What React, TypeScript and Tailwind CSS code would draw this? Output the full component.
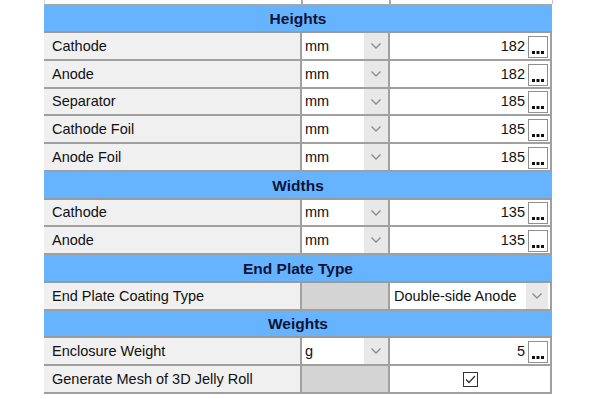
import React from "react";

type Row =
  | { kind: "header"; title: string; h: number }
  | { kind: "unit"; label: string; unit: string; value: string; h: number }
  | { kind: "combo"; label: string; value: string; h: number }
  | { kind: "check"; label: string; h: number };

const rows: Row[] = [
  { kind: "header", title: "Heights", h: 28 },
  { kind: "unit", label: "Cathode", unit: "mm", value: "182", h: 28 },
  { kind: "unit", label: "Anode", unit: "mm", value: "182", h: 28 },
  { kind: "unit", label: "Separator", unit: "mm", value: "185", h: 27 },
  { kind: "unit", label: "Cathode Foil", unit: "mm", value: "185", h: 28 },
  { kind: "unit", label: "Anode Foil", unit: "mm", value: "185", h: 28 },
  { kind: "header", title: "Widths", h: 28 },
  { kind: "unit", label: "Cathode", unit: "mm", value: "135", h: 27 },
  { kind: "unit", label: "Anode", unit: "mm", value: "135", h: 28 },
  { kind: "header", title: "End Plate Type", h: 28 },
  { kind: "combo", label: "End Plate Coating Type", value: "Double-side Anode", h: 28 },
  { kind: "header", title: "Weights", h: 27 },
  { kind: "unit", label: "Enclosure Weight", unit: "g", value: "5", h: 28 },
  { kind: "check", label: "Generate Mesh of 3D Jelly Roll", h: 28 },
];

const Chevron = () => (
  <svg width="12" height="8" viewBox="0 0 12 8" fill="none">
    <path d="M1.5 1.5 L6 6 L10.5 1.5" stroke="#8a8a8a" strokeWidth="1.3" />
  </svg>
);

const Dots = () => (
  <div className="ml-[3px] mr-[2px] flex h-[22px] w-[20px] items-end justify-center border border-[#8f8f8f] bg-white pb-[3px]">
    <svg width="12" height="3" viewBox="0 0 12 3">
      <rect x="0" y="0" width="3" height="3" fill="#111" />
      <rect x="4.5" y="0" width="3" height="3" fill="#111" />
      <rect x="9" y="0" width="3" height="3" fill="#111" />
    </svg>
  </div>
);

export default function App() {
  const font = { fontFamily: '"Liberation Sans", Arial, sans-serif' };
  return (
    <div className="h-[399px] w-[600px] overflow-hidden bg-white" style={font}>
      <div className="ml-[44px] w-[508px]">
        {/* partial row at top */}
        <div className="grid h-[5px] grid-cols-[256px_90px_162px] border-b border-[#a8a8a8] border-l border-l-[#d8d8d8]">
          <div className="bg-white" />
          <div className="border-x-2 border-[#a8a8a8] bg-white" />
          <div className="border-r border-[#c8c8c8] bg-white" />
        </div>
        {rows.map((r, i) => {
          if (r.kind === "header") {
            return (
              <div
                key={i}
                className="flex items-center justify-center border-b-2 border-[#9a9a9a] bg-[#66b3ff] pt-[1px] text-[15.5px] font-bold text-[#0c1436]"
                style={{ height: r.h }}
              >
                {r.title}
              </div>
            );
          }
          return (
            <div
              key={i}
              className="grid grid-cols-[256px_90px_162px] border-b-2 border-[#a0a0a0]"
              style={{ height: r.h }}
            >
              <div className="flex items-center bg-[#f0f0f0] pl-[8px] pt-[1px] text-[14.5px] text-[#111]">{r.label}</div>
              {r.kind === "unit" ? (
                <div className="flex border-x-2 border-[#a0a0a0] bg-white">
                  <div className="flex flex-1 items-center pl-[3px] pt-[1px] text-[14.5px] text-[#111]">{r.unit}</div>
                  <div className="flex w-[24px] items-center justify-center bg-[#e8e8e8]">
                    <Chevron />
                  </div>
                </div>
              ) : (
                <div className="border-x-2 border-[#a0a0a0] bg-[#d4d4d4]" />
              )}
              {r.kind === "unit" && (
                <div className="flex items-center justify-end border-r-2 border-[#a0a0a0] bg-white pt-[1px] text-[14.5px] text-[#111]">
                  <span>{r.value}</span>
                  <Dots />
                </div>
              )}
              {r.kind === "combo" && (
                <div className="flex border-r-2 border-[#a0a0a0] bg-white">
                  <div className="flex flex-1 items-center pl-[4px] pt-[1px] text-[14.5px] text-[#111]">{r.value}</div>
                  <div className="mr-[2px] flex w-[22px] items-center justify-center bg-[#e8e8e8]">
                    <Chevron />
                  </div>
                </div>
              )}
              {r.kind === "check" && (
                <div className="flex items-center justify-center border-r-2 border-[#a0a0a0] bg-white">
                  <div className="flex h-[15px] w-[15px] items-center justify-center border border-[#333] bg-white">
                    <svg width="11" height="9" viewBox="0 0 11 9" fill="none">
                      <path d="M1 4.5 L4 7.5 L10 1" stroke="#333" strokeWidth="1.3" />
                    </svg>
                  </div>
                </div>
              )}
            </div>
          );
        })}
      </div>
    </div>
  );
}
